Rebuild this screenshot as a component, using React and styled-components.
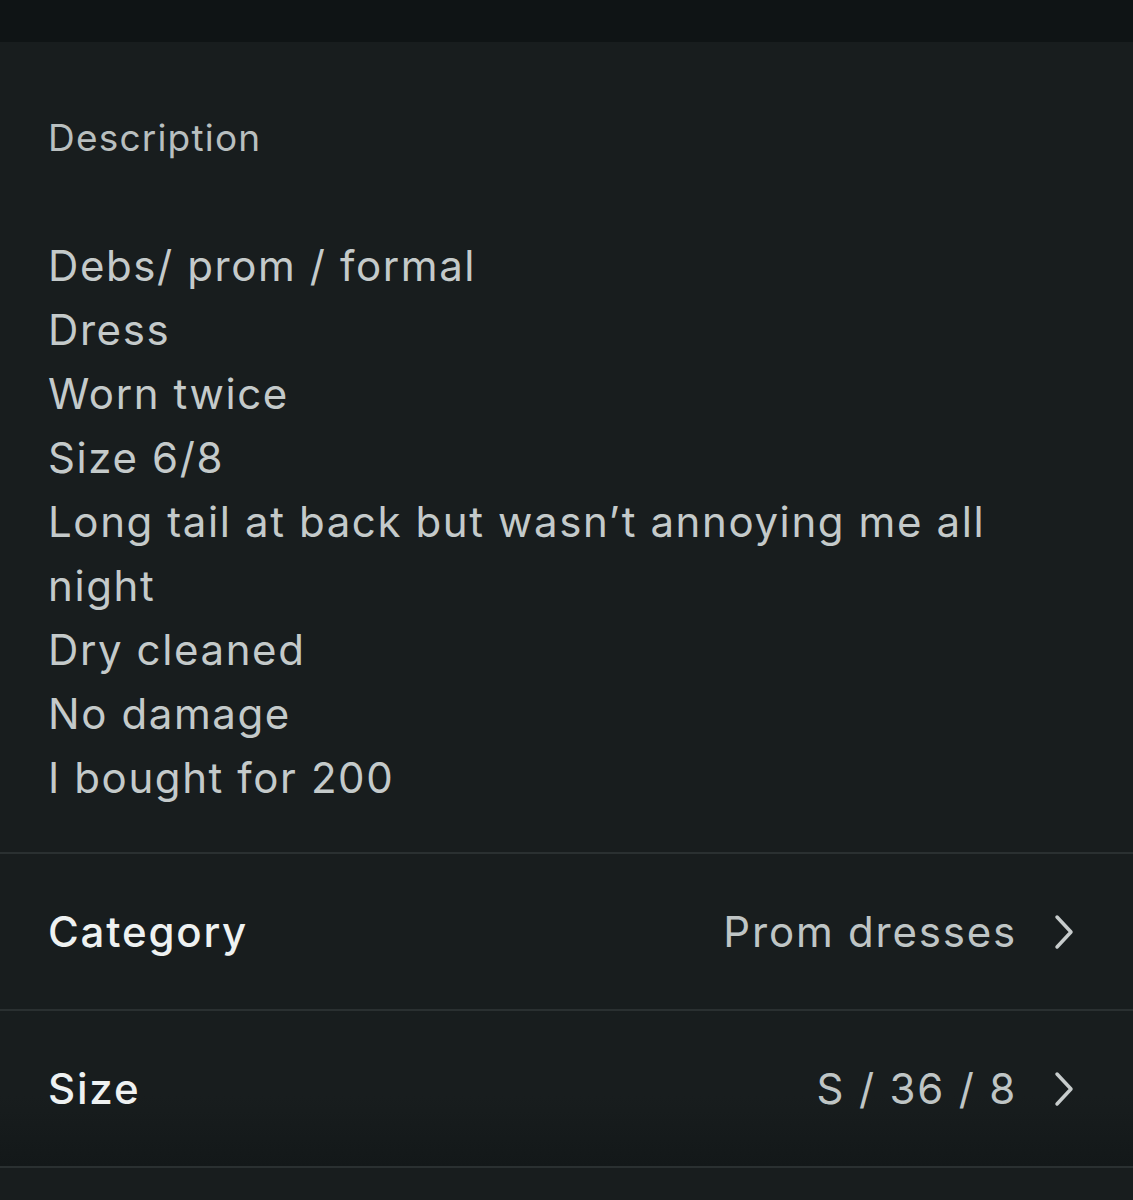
import React from 'react';
import styled, { createGlobalStyle } from 'styled-components';

const GlobalStyle = createGlobalStyle`
  html, body {
    margin: 0;
    padding: 0;
    background: #181d1e;
  }
  body {
    font-family: Inter, "Noto Sans", "Liberation Sans", sans-serif;
    -webkit-font-smoothing: antialiased;
  }
`;

const Page = styled.div`
  width: 1133px;
  height: 1200px;
  overflow: hidden;
  background: #181d1e;
  display: flex;
  flex-direction: column;
`;

const TopBar = styled.div`
  height: 42px;
  background: #0f1415;
  flex-shrink: 0;
`;

const DescriptionBlock = styled.section`
  padding: 70px 48px 42px 48px;
  border-bottom: 2px solid #2a3031;
`;

const Label = styled.div`
  font-size: 37px;
  line-height: 52px;
  color: #b9bfbf;
  letter-spacing: 1.2px;
  margin-bottom: 70px;
`;

const Body = styled.div`
  font-size: 42px;
  line-height: 64px;
  color: #c4caca;
  letter-spacing: 1.6px;
`;

const BodyLine = styled.div``;

const Row = styled.div`
  height: 155px;
  flex-shrink: 0;
  display: flex;
  align-items: center;
  justify-content: space-between;
  padding: 0 58px 0 48px;
  border-bottom: 2px solid #2a3031;
  background: ${(p) => (p.$fade ? 'linear-gradient(#181d1e 55%, #131819)' : 'transparent')};
`;

const RowTitle = styled.div`
  font-size: 42px;
  font-weight: 500;
  color: #eef1f1;
  letter-spacing: 1.8px;
`;

const RowValue = styled.div`
  display: flex;
  align-items: center;
  gap: 36px;
  font-size: 42px;
  color: #bfc5c5;
  letter-spacing: 1.8px;
`;

const Chevron = () => (
  <svg width="22" height="36" viewBox="0 0 22 36" fill="none">
    <path d="M4 3l14 15L4 33" stroke="#c7cccc" strokeWidth="3.5" strokeLinecap="round" strokeLinejoin="round" />
  </svg>
);

const lines = [
  'Debs/ prom / formal',
  'Dress',
  'Worn twice',
  'Size 6/8',
  'Long tail at back but wasn’t annoying me all night',
  'Dry cleaned',
  'No damage',
  'I bought for 200',
];

export default function App() {
  return (
    <Page>
      <GlobalStyle />
      <TopBar />
      <DescriptionBlock>
        <Label>Description</Label>
        <Body>
          {lines.map((l) => (
            <BodyLine key={l}>{l}</BodyLine>
          ))}
        </Body>
      </DescriptionBlock>
      <Row>
        <RowTitle>Category</RowTitle>
        <RowValue>
          Prom dresses
          <Chevron />
        </RowValue>
      </Row>
      <Row $fade>
        <RowTitle>Size</RowTitle>
        <RowValue>
          S / 36 / 8
          <Chevron />
        </RowValue>
      </Row>
    </Page>
  );
}
